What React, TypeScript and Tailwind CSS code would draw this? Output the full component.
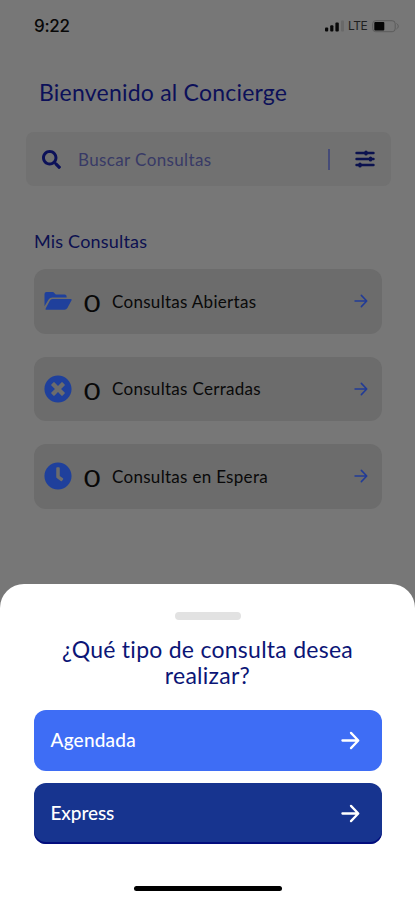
import type { ReactNode } from "react"
import { FaClock, FaSearch, FaTimesCircle } from "react-icons/fa"

function FolderIcon() {
  return (
    <svg width="28" height="28" viewBox="0 0 28 28" fill="currentColor">
      <path d="M0.5 7Q0.5 5 2.5 5H9.2L11.8 7.6H20.6Q22.6 7.6 22.6 9.6V10.6H8.2Q5.8 10.6 4.6 12.6L0.5 19.2Z" />
      <path d="M8.6 12H26.6Q28.3 12 27.4 13.6L23.4 21Q22.4 22.8 20.4 22.8H2.6Q1 22.8 1.8 21.3L5.8 13.8Q6.8 12 8.6 12Z" />
    </svg>
  )
}

const consultas = [
  {
    label: "Consultas Abiertas",
    count: 0,
    icon: <FolderIcon />,
  },
  {
    label: "Consultas Cerradas",
    count: 0,
    icon: <FaTimesCircle className="h-[28px] w-[28px]" />,
  },
  {
    label: "Consultas en Espera",
    count: 0,
    icon: <FaClock className="h-[28px] w-[28px]" />,
  },
]

function Arrow({ className }: { className: string }) {
  return (
    <svg
      viewBox="0 0 20 20"
      className={className}
      fill="none"
      stroke="currentColor"
      strokeLinecap="round"
      strokeLinejoin="round"
    >
      <path d="M1.5 10H18M10.5 2L18.2 10L10.5 18" />
    </svg>
  )
}

function StatusBar() {
  return (
    <div className="flex h-[52px] items-center justify-between pr-[15px] pl-[34px] text-[#080808]">
      <span className="font-['Inter'] text-[17px] leading-none font-medium tracking-[-0.3px]">9:22</span>
      <div className="flex items-center">
        <svg width="20" height="12" viewBox="0 0 20 12" fill="currentColor">
          <rect x="0" y="7.5" width="3.2" height="4" rx="1" />
          <rect x="5.2" y="5.2" width="3.2" height="6.3" rx="1" />
          <rect x="10.4" y="2.6" width="3.4" height="8.9" rx="1" />
          <rect x="16" y="0.5" width="3" height="11" rx="1" fill="#696969" />
        </svg>
        <span className="ml-[3px] w-[21px] font-['Inter'] text-[12px] leading-none tracking-[-0.5px] text-[#202020]">
          LTE
        </span>
        <svg className="ml-[3px]" width="28" height="13" viewBox="0 0 28 13" fill="none">
          <rect x="0.7" y="0.7" width="22.5" height="11" rx="3" stroke="#5c5c5c" />
          <rect x="2.3" y="2" width="10" height="8.5" rx="1" fill="#050505" />
          <path d="M24.5 3.5C26.8 5 26.8 7.5 24.5 9" stroke="#5c5c5c" />
        </svg>
      </div>
    </div>
  )
}

function SearchBar() {
  return (
    <div className="mx-[26px] mt-[26px] flex h-[54px] w-[365px] items-center rounded-lg bg-[#717171] pr-[16px] pl-[16px]">
      <FaSearch className="h-[19px] w-[19px] text-[#0c1159]" />
      <span className="mt-[2px] ml-[17px] text-[17px] tracking-[0.38px] text-[#383a66]">Buscar Consultas</span>
      <div className="ml-auto h-[21px] w-[2px] bg-[#454b78]" />
      <svg className="ml-[25px]" width="20" height="18" viewBox="0 0 20 18" stroke="#0b124f">
        <path d="M1.5 3H18.5M1.5 9H18.5M1.5 15H18.5" strokeWidth="2.4" strokeLinecap="round" />
        <path d="M11 2V4M15.5 8V10M5 14V16" strokeWidth="3.2" strokeLinecap="round" />
      </svg>
    </div>
  )
}

function SheetButton({ className, children }: { className: string; children: ReactNode }) {
  return (
    <button
      className={`flex h-[61px] w-full items-center justify-between rounded-xl pr-[22px] pl-[17px] text-[19px] font-medium text-white ${className}`}
    >
      {children}
      <Arrow className="h-[19px] w-[19px] stroke-[2.4]" />
    </button>
  )
}

export default function App() {
  return (
    <div className="flex h-[900px] w-[415px] flex-col overflow-hidden bg-[#777777] font-['Lato',sans-serif]">
      <StatusBar />

      <h1 className="mt-[26px] ml-[39px] text-[23px] leading-[28px] tracking-[0.22px] whitespace-nowrap text-[#0c1059]">
        Bienvenido al Concierge
      </h1>

      <SearchBar />

      <h2 className="mt-[43px] ml-[34px] text-[18px] leading-[24px] tracking-[0.2px] text-[#0c1050]">Mis Consultas</h2>

      <div className="mt-[16px] flex flex-col gap-[23px] px-[34px]">
        {consultas.map((item) => (
          <div key={item.label} className="flex h-[64.5px] w-[348px] items-center rounded-xl bg-[#6c6c6c] pr-[14px] pl-[10px]">
            <span className="text-[#1f409c]">{item.icon}</span>
            <span className="mt-[4px] ml-[11px] w-[18px] scale-x-120 text-center text-[24px] leading-none text-[#080808]">
              {item.count}
            </span>
            <span className="ml-[11px] text-[17px] tracking-[0.3px] text-[#090909]">{item.label}</span>
            <Arrow className="ml-auto h-[14px] w-[14px] stroke-[2.2] text-[#213b97]" />
          </div>
        ))}
      </div>

      {/* Bottom sheet */}
      <div className="mt-auto flex h-[316px] flex-col items-center rounded-t-[24px] bg-white px-[34px]">
        <div className="mt-[28px] h-[8px] w-[66px] rounded-full bg-[#e2e2e2]" />
        <h3 className="mt-[16px] text-center text-[23px] leading-[26px] tracking-[0.26px] whitespace-nowrap text-[#0b1576]">
          ¿Qué tipo de consulta desea
          <br />
          realizar?
        </h3>
        <div className="mt-[22px] flex w-[348px] flex-col gap-[12px]">
          <SheetButton className="bg-[#3e6df5]">
            <span className="tracking-[0.2px]">Agendada</span>
          </SheetButton>
          <SheetButton className="bg-[#17348f] shadow-[inset_0_-2px_0_#020d7d]">
            <span className="tracking-[-0.1px]">Express</span>
          </SheetButton>
        </div>
        <div className="mt-[42px] h-[5px] w-[148px] rounded-full bg-black" />
      </div>
    </div>
  )
}
